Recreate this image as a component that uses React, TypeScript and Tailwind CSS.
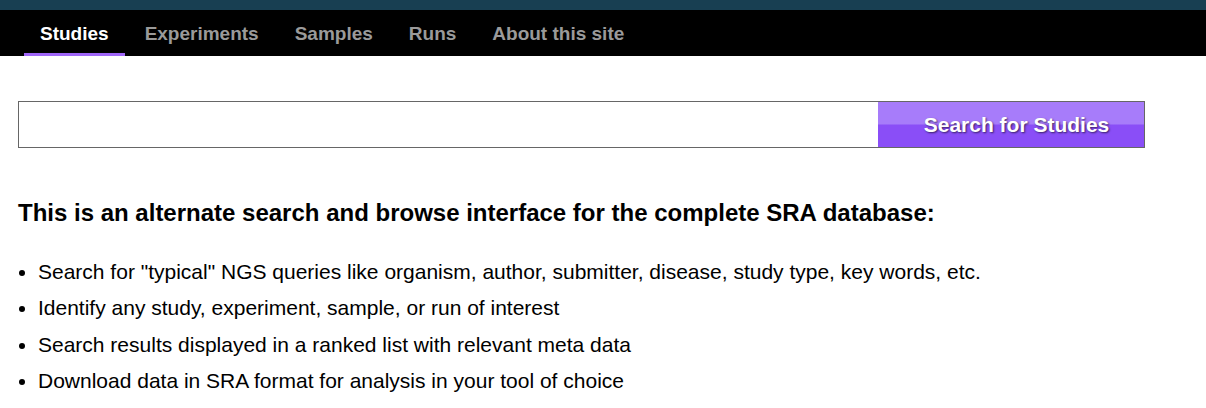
import React from "react";

export default function App() {
  const nav = ["Studies", "Experiments", "Samples", "Runs", "About this site"];
  const bullets = [
    'Search for "typical" NGS queries like organism, author, submitter, disease, study type, key words, etc.',
    "Identify any study, experiment, sample, or run of interest",
    "Search results displayed in a ranked list with relevant meta data",
    "Download data in SRA format for analysis in your tool of choice",
  ];
  return (
    <div className="w-[1206px] h-[408px] overflow-hidden bg-white" style={{ fontFamily: '"Liberation Sans", Arial, sans-serif' }}>
      <div className="h-[10px] bg-[#183f52]" />
      <div className="h-[46px] bg-black flex items-stretch pl-6 gap-1">
        {nav.map((n, i) => (
          <div
            key={n}
            className={
              "px-4 flex items-center text-[19px] font-bold border-b-[3px] pt-[6px] " +
              (i === 0 ? "text-white border-[#a066f8]" : "text-[#9a9a9a] border-transparent")
            }
          >
            {n}
          </div>
        ))}
      </div>
      <div className="px-[18px]">
        <div className="mt-[45px] flex w-[1127px] h-[47px] border border-[#666]">
          <div className="flex-1 bg-white" />
          <div className="w-[266px] pl-[11px] flex items-center justify-center text-white font-bold text-[21px] bg-[linear-gradient(to_bottom,#a77cfa_0%,#a77cfa_48%,#8a4ef7_52%,#8a4ef7_100%)] [text-shadow:1px_1px_2px_rgba(0,0,0,0.6)]">
            Search for Studies
          </div>
        </div>
        <h1 className="mt-[51px] text-[24px] font-bold text-black leading-[28px]">
          This is an alternate search and browse interface for the complete SRA database:
        </h1>
        <ul className="mt-[33px] list-disc pl-[20px] text-[21px] text-black">
          {bullets.map((b) => (
            <li key={b} className="leading-[24px] mb-[12.3px]">
              {b}
            </li>
          ))}
        </ul>
      </div>
    </div>
  );
}
